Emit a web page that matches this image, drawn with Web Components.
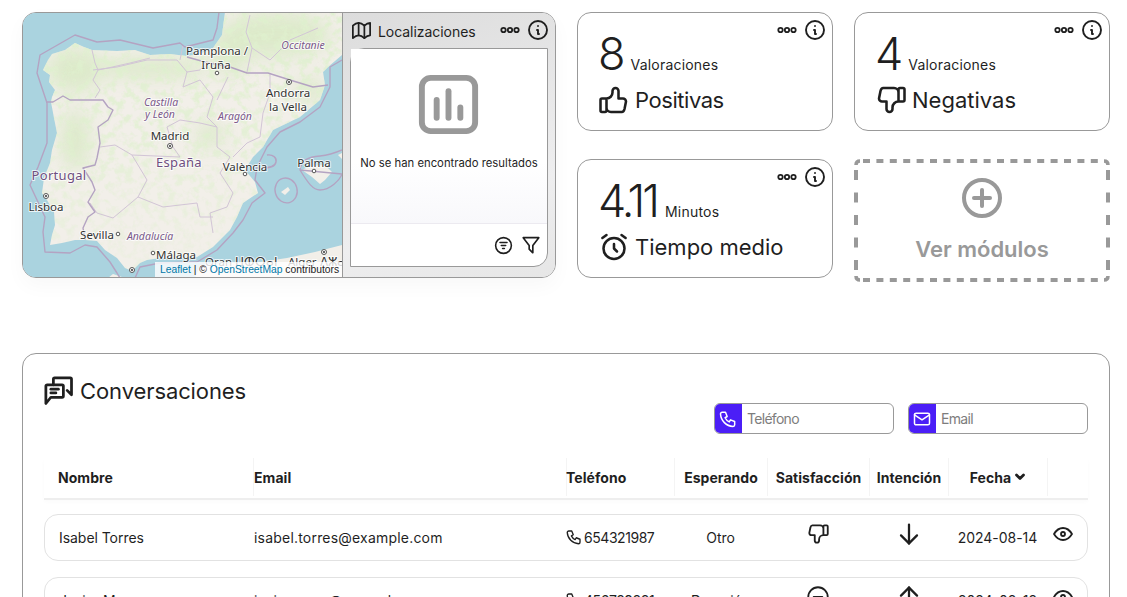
<!DOCTYPE html>
<html lang="es">
<head>
<meta charset="utf-8">
<title>Panel</title>
<style>
	html, body { margin: 0; height: 597px; overflow: hidden; background: #fff; }
	body { font-family: "Inter", "Liberation Sans", sans-serif; color: #1f1f1f; }
</style>
</head>
<body>
<app-dashboard></app-dashboard>
<script>
"use strict";

(function() {
	const icons = {
		dots: `<circle cx="5.5" cy="12" r="2.2"/><circle cx="12" cy="12" r="2.2"/><circle cx="18.5" cy="12" r="2.2"/>`,
		info: `<circle cx="12" cy="12" r="9"/><path d="M12 8h.01"/><path d="M11 12h1v4h1"/>`,
		map: `<path d="M3 7c2-2 4-3 6-3c2 0 4 1 6 3c2-2 4-3 6-3v13c-2 0-4 1-6 3c-2-2-4-3-6-3c-2 0-4 1-6 3z"/><path d="M9 4v13"/><path d="M15 7v13"/>`,
		thumbUp: `<path d="M7 11v8a1 1 0 0 1 -1 1h-2a1 1 0 0 1 -1 -1v-7a1 1 0 0 1 1 -1h3a4 4 0 0 0 4 -4v-1a2 2 0 0 1 4 0v5h3a2 2 0 0 1 2 2l-1 5a2 3 0 0 1 -2 2h-7a3 3 0 0 1 -3 -3"/>`,
		thumbDown: `<g transform="matrix(-1 0 0 1 24 0)"><path d="M7 13v-8a1 1 0 0 0 -1 -1h-2a1 1 0 0 0 -1 1v7a1 1 0 0 0 1 1h3a4 4 0 0 1 4 4v1a2 2 0 0 0 4 0v-5h3a2 2 0 0 0 2 -2l-1 -5a2 3 0 0 0 -2 -2h-7a3 3 0 0 0 -3 3"/></g>`,
		alarm: `<circle cx="12" cy="13" r="7"/><path d="M12 10v3l2 2"/><path d="M7 4l-2.75 2"/><path d="M17 4l2.75 2"/>`,
		plus: `<circle cx="12" cy="12" r="9"/><path d="M8 12h8"/><path d="M12 8v8"/>`,
		chat: `<path d="M1.500 22v-14a1 1 0 0 1 1-1h12a1 1 0 0 1 1 1v8a1 1 0 0 1-1 1h-9z"/><path d="M5.500 10.500h6"/><path d="M5.500 13.500h4"/><path d="M7.500 7v-4.500a1 1 0 0 1 1-1h12.500a1 1 0 0 1 1 1v12.500l-3.500-3.500"/>`,
		phone: `<path d="M5 4h4l2 5l-2.5 1.5a11 11 0 0 0 5 5l1.5 -2.5l5 2v4a2 2 0 0 1 -2 2a16 16 0 0 1 -15 -15a2 2 0 0 1 2 -2"/>`,
		mail: `<path d="M3 7a2 2 0 0 1 2-2h14a2 2 0 0 1 2 2v10a2 2 0 0 1-2 2h-14a2 2 0 0 1-2-2z"/><path d="M3 7l9 6l9-6"/>`,
		eye: `<path d="M10 12a2 2 0 1 0 4 0a2 2 0 0 0 -4 0"/><path d="M21 12c-2.4 4 -5.4 6 -9 6c-3.6 0 -6.6 -2 -9 -6c2.4 -4 5.4 -6 9 -6c3.6 0 6.6 2 9 6"/>`,
		arrowDown: `<path d="M12 5v14"/><path d="M18 13l-6 6"/><path d="M6 13l6 6"/>`,
		arrowUp: `<path d="M12 5v14"/><path d="M18 11l-6 -6"/><path d="M6 11l6 -6"/>`,
		neutral: `<circle cx="12" cy="12" r="9"/><path d="M8 12h8"/>`,
		funnel: `<path d="M3.5 4h17l-6.5 8.5v8l-4-4v-4z"/>`,
		filterList: `<circle cx="12" cy="12" r="9"/><path d="M8 8.5h8"/><path d="M9.5 12h5"/><path d="M11 15.5h2"/>`,
		chevron: `<path d="M5 8l7 7l7-7"/>`,
		chart: `<rect x="3" y="3" width="18" height="18" rx="3"/><path d="M8 10.5v6"/><path d="M12 7.5v9"/><path d="M16 13v3.5"/>`
	};

	class UiIcon extends HTMLElement {
		connectedCallback() {
			let size = this.getAttribute('size') || 24;
			let stroke = this.getAttribute('stroke') || 2;
			this.attachShadow({mode: "open"}).innerHTML = `
			<style>
				:host { display: inline-flex; flex: none; width: ${size}px; height: ${size}px; }
				svg { width: 100%; height: 100%; display: block; }
			</style>
			<svg viewBox="0 0 24 24" fill="none" stroke="currentColor" stroke-width="${stroke}" stroke-linecap="round" stroke-linejoin="round">${icons[this.getAttribute('name')]}</svg>`;
		}
	}
	customElements.define('ui-icon', UiIcon);

	class CardActions extends HTMLElement {
		constructor() {
			super();
			this.attachShadow({mode: "open"}).innerHTML = `
			<style>
				:host { display: flex; gap: 4px; align-items: center; color: #1f1f1f; }
			</style>
			<ui-icon name="dots" stroke="1.800"></ui-icon>
			<ui-icon name="info" stroke="1.900"></ui-icon>`;
		}
	}
	customElements.define('card-actions', CardActions);

	const coast = "M225 12L222 35L213 48L200 54L187 56L170 54L150 55L135 50L117 51L92 50L84 47L75 43L65 50L52 54L48 60L43 70L50 75L49 82L55 90L52 97L51 102L54 118L57 133L52 150L50 163L44 178L42 193L47 200L54 212L55 225L52 235L50 245L62 243L75 240L85 240L97 241L105 250L117 258L125 268L132 271L140 263L147 260L160 258L180 258L197 257L213 247L230 230L237 217L243 203L258 193L255 182L245 170L253 157L263 147L273 130L300 117L320 100L325 85L323 72L328 67L342 55V12Z";

	const mapTemplate = `
	<style>
		:host { display: block; width: 320px; height: 266px; position: relative; overflow: hidden; background: #aad3df; }
		svg { display: block; width: 320px; height: 266px; }
		text { font-family: "Noto Sans", "Open Sans", sans-serif; font-size: 11.5px; fill: #333; text-anchor: middle; paint-order: stroke; stroke: rgba(255,255,255,.75); stroke-width: 2px; stroke-linejoin: round; }
		text.region { font-style: italic; font-size: 10.5px; fill: #7b5a8b; }
		text.country { font-size: 13px; fill: #6f4f80; letter-spacing: .3px; }
		text.far { text-anchor: start; }
		.att { position: absolute; right: 0; bottom: 0; height: 16px; width: 187px; box-sizing: border-box; padding-left: 5px; background: rgba(255,255,255,.8); font: 10.3px/16px "Liberation Sans", Arial, sans-serif; color: #222; white-space: nowrap; }
		.att span { color: #0078a8; }
	</style>
	<svg viewBox="22 12 320 266">
		<defs>
			<clipPath id="land"><path d="${coast}"/></clipPath>
			<filter id="noise" x="0" y="0" width="100%" height="100%">
				<feTurbulence type="fractalNoise" baseFrequency="0.12" numOctaves="3" seed="7"/>
				<feColorMatrix values="0 0 0 0 .74  0 0 0 0 .87  0 0 0 0 .62  4.4 0 0 0 -2"/>
			</filter>
			<filter id="soft"><feGaussianBlur stdDeviation="9"/></filter>
			<linearGradient id="fade" x1="0" y1="0" x2="0" y2="1">
				<stop offset="0" stop-color="#fff"/>
				<stop offset=".45" stop-color="#fff" stop-opacity=".8"/>
				<stop offset="1" stop-color="#fff" stop-opacity=".22"/>
			</linearGradient>
			<mask id="north" maskUnits="userSpaceOnUse" x="22" y="12" width="320" height="266">
				<rect x="22" y="12" width="320" height="266" fill="url(#fade)"/>
			</mask>
		</defs>
		<rect x="22" y="12" width="320" height="266" fill="#aad3df"/>
		<g fill="#f2efe9">
			<path d="${coast}"/>
			<path d="M302 170L310 166L325 165L332 172L325 180L320 184L312 177Z"/>
			<path d="M281 192L288 187L290 190L285 195Z" />
			<path d="M338 155L342 153V159Z"/>
			<path d="M195 278L200 265L230 263L260 262L287 258L315 252L342 245V278Z"/>
			<path d="M108 278L113 274L125 278Z"/>
		</g>
		<g clip-path="url(#land)">
			<g fill="#d5e8c0" filter="url(#soft)" opacity=".75">
				<ellipse cx="75" cy="70" rx="28" ry="22"/>
				<ellipse cx="150" cy="68" rx="60" ry="10"/>
				<ellipse cx="275" cy="35" rx="55" ry="22"/>
				<ellipse cx="230" cy="50" rx="18" ry="25"/>
				<ellipse cx="75" cy="140" rx="14" ry="30"/>
				<ellipse cx="310" cy="90" rx="14" ry="12"/>
				<ellipse cx="210" cy="135" rx="14" ry="12"/>
			</g>
			<g mask="url(#north)">
				<rect x="22" y="12" width="320" height="266" filter="url(#noise)" opacity=".85"/>
			</g>
		</g>
		<g fill="none" stroke="#d2c5d6" stroke-width="1" stroke-linejoin="round">
			<path d="M92 50L95 63L98 70L93 80L100 90L95 98"/>
			<path d="M98 70L108 68L130 63L150 58"/>
			<path d="M93 70L117 67L147 60L177 60L187 72L183 87L200 80L213 97L207 117L217 127L217 147L230 157L220 173L233 193L227 207L210 213L213 233"/>
			<path d="M100 147L115 145L132 155L147 180L138 197L163 207L197 203L200 217L213 217"/>
			<path d="M90 203L97 213L113 218L138 197"/>
			<path d="M167 127L180 120L200 123L217 127"/>
			<path d="M167 127L173 147L180 157L132 155"/>
			<path d="M270 73L270 93L263 113L260 137L247 143L233 157"/>
			<path d="M228 77L217 100"/>
			<path d="M180 60L183 45M187 72L200 70L205 62"/>
			<path d="M250 15L246 32L252 48L247 72"/>
			<path d="M252 48L270 60L290 40L318 28"/>
		</g>
		<g fill="none" stroke="#b4a3c2" stroke-width="1.400" stroke-linejoin="round">
			<path d="M46 102L53 102L63 96L70 100L88 100L103 100L108 107L113 110L108 120L98 127L100 143L97 158L95 165L83 168L92 182L95 190L88 202L95 212L88 217L83 228L85 240"/>
			<path d="M187 57L205 62L230 67L247 73L268 73L290 80L313 87L328 85"/>
			<path d="M219 12L217 28L213 40L185 47L180 43L153 48L120 40L97 42L75 35L40 55L37 73L47 103L47 143L38 167L30 185L45 217L43 232L45 252L70 253L85 245L97 247L110 262L117 273L120 278"/>
			<path d="M342 60L330 67L330 87L320 107L300 122L280 132L267 147L257 167L255 180L265 193L252 203L243 220L233 233L217 250L197 262L160 263L140 267L135 278"/>
			<path d="M300 170C301 160 308 157 320 156C330 155 335 153 342 150M342 174C340 180 330 190 320 190C313 190 308 183 300 170Z"/>
			<ellipse cx="286" cy="190.500" rx="11" ry="12.500" transform="rotate(-15 286 190)"/>
			<path d="M267 155C273 154 277 158 276 162C275 167 270 168 262 168"/>
		</g>
		<g fill="#fff" stroke="#555" stroke-width="1">
			<circle cx="217" cy="73" r="1.800"/><circle cx="245" cy="174" r="1.800"/><circle cx="314" cy="171" r="1.800"/>
			<circle cx="118" cy="234" r="1.800"/><circle cx="153" cy="253" r="1.800"/>
			<circle cx="289" cy="82" r="2.500"/><circle cx="170" cy="146" r="2.500"/><circle cx="46" cy="196" r="2.500"/><circle cx="132" cy="270" r="2.500"/><circle cx="324" cy="252" r="2.500"/>
		</g>
		<g fill="#333">
			<circle cx="289" cy="82" r="1"/><circle cx="170" cy="146" r="1"/><circle cx="46" cy="196" r="1"/><circle cx="132" cy="270" r="1"/><circle cx="324" cy="252" r="1"/>
		</g>
		<text x="217" y="55">Pamplona /</text>
		<text x="216" y="69">Iruña</text>
		<text class="region" x="303" y="49">Occitanie</text>
		<text x="288" y="97">Andorra</text>
		<text x="288" y="111">la Vella</text>
		<text class="region" x="161" y="106">Castilla</text>
		<text class="region" x="160" y="118">y León</text>
		<text class="region" x="235" y="120">Aragón</text>
		<text x="170" y="140">Madrid</text>
		<text class="country" x="179" y="167">España</text>
		<text x="245" y="171">València</text>
		<text x="314" y="167">Palma</text>
		<text class="country" x="59" y="180">Portugal</text>
		<text x="46" y="211">Lisboa</text>
		<text x="97" y="239">Sevilla</text>
		<text class="region" x="150" y="240">Andalucía</text>
		<text x="176" y="259">Málaga</text>
		<text class="far" x="205" y="266">Oran ⵡⵀⵔⴰⵏ</text>
		<text class="far" x="288" y="266">Alger ⴷⵣⴰ</text>
	</svg>
	<div class="att"><span>Leaflet</span> | © <span>OpenStreetMap</span> contributors</div>
	`;

	class SpainMap extends HTMLElement {
		constructor() {
			super();
			this.attachShadow({mode: "open"}).innerHTML = mapTemplate;
		}
	}
	customElements.define('spain-map', SpainMap);

	class MapCard extends HTMLElement {
		constructor() {
			super();
			this.attachShadow({mode: "open"}).innerHTML = `
			<style>
				:host { display: flex; box-sizing: border-box; height: 266px; align-self: start; border: 1px solid #999; border-radius: 14px; overflow: hidden; }
				spain-map { flex: none; margin-left: -1px; margin-top: -1px; }
				.side { flex: 1; min-width: 0; display: flex; flex-direction: column; box-sizing: border-box; border-left: 1px solid #999; padding: 0 7px 10px 7px; background: linear-gradient(160deg, #dcdcdc, #eeeeef 70%, #e6e6e6); }
				.head { display: flex; align-items: center; height: 35px; font-size: 14px; white-space: nowrap; }
				.head .title { flex: 1; margin: 2px 0 0 5px; letter-spacing: -.05px; }
				.head card-actions { margin-right: -2px; margin-top: -2px; }
				.inner { flex: 1; display: flex; flex-direction: column; background: #fff; border: 1px solid #999; border-radius: 14px 0 14px 0; }
				.empty { height: 175px; box-sizing: border-box; padding-top: 20px; display: flex; flex-direction: column; align-items: center; border-bottom: 1px solid #eceaf0; background: linear-gradient(#fff 65%, #f8f8fb); color: #999; }
				.empty ui-icon { margin-left: -2px; }
				.empty p { margin: 15px 0 0; font-size: 11.3px; line-height: 16px; color: #1f1f1f; white-space: nowrap; }
				.foot { flex: 1; display: flex; justify-content: flex-end; align-items: center; gap: 6px; padding: 0 5px 0 0; }
			</style>
			<spain-map></spain-map>
			<div class="side">
				<div class="head">
					<ui-icon name="map" size="23" stroke="1.800"></ui-icon>
					<span class="title">Localizaciones</span>
					<card-actions></card-actions>
				</div>
				<div class="inner">
					<div class="empty">
						<ui-icon name="chart" size="71" stroke="2"></ui-icon>
						<p>No se han encontrado resultados</p>
					</div>
					<div class="foot">
						<ui-icon name="filterList" size="21" stroke="1.800"></ui-icon>
						<ui-icon name="funnel" size="22" stroke="1.800"></ui-icon>
					</div>
				</div>
			</div>`;
		}
	}
	customElements.define('map-card', MapCard);

	class StatCard extends HTMLElement {
		connectedCallback() {
			this.attachShadow({mode: "open"}).innerHTML = `
			<style>
				:host { display: grid; grid-template-columns: minmax(0, 1fr) auto; box-sizing: border-box; height: 119px; border: 1px solid #999; border-radius: 14px; }
				.body { padding: 19px 0 0 20px; white-space: nowrap; }
				card-actions { padding: 5px 5px 0 0; align-self: start; }
				.num { display: flex; align-items: baseline; gap: 8px; }
				.num b { font-weight: 300; font-size: 45px; line-height: 44px; letter-spacing: -3px; }
				.num span { font-size: 14px; letter-spacing: .2px; }
				.label { display: flex; align-items: center; margin: 7px 0 0 -2px; height: 34px; gap: 3px; font-size: 22px; letter-spacing: ${this.getAttribute('spacing') || 0}px; }
			</style>
			<div class="body">
				<div class="num"><b>${this.getAttribute('value')}</b><span>${this.getAttribute('unit')}</span></div>
				<div class="label"><ui-icon name="${this.getAttribute('icon')}" size="36" stroke="1.700"></ui-icon>${this.getAttribute('label')}</div>
			</div>
			<card-actions></card-actions>`;
		}
	}
	customElements.define('stat-card', StatCard);

	class AddCard extends HTMLElement {
		constructor() {
			super();
			this.attachShadow({mode: "open"}).innerHTML = `
			<style>
				:host { display: flex; flex-direction: column; align-items: center; box-sizing: border-box; height: 123px; position: relative; padding-top: 15px; color: #999; }
				.dash { position: absolute; inset: 0; width: 256px; height: 123px; }
				span { margin-top: 13px; font-size: 22px; line-height: 28px; font-weight: 600; }
			</style>
			<svg class="dash" viewBox="0 0 256 123" fill="none" stroke="#999" stroke-width="4">
				<path d="M9 2H247" stroke-dasharray="7 6.400"/>
				<path d="M9 121H247" stroke-dasharray="7 6.400"/>
				<path d="M2 11V112" stroke-dasharray="10 12.500"/>
				<path d="M254 11V112" stroke-dasharray="10 12.500"/>
				<path d="M2 6Q2 2 6 2M250 2Q254 2 254 6M254 117Q254 121 250 121M6 121Q2 121 2 117" stroke-width="3.500"/>
			</svg>
			<ui-icon name="plus" size="48" stroke="2"></ui-icon>
			<span>Ver módulos</span>`;
		}
	}
	customElements.define('add-card', AddCard);

	class SearchBox extends HTMLElement {
		connectedCallback() {
			this.attachShadow({mode: "open"}).innerHTML = `
			<style>
				:host { display: flex; box-sizing: border-box; width: 180px; height: 31px; border: 1px solid #999; border-radius: 6px; overflow: hidden; }
				.ic { flex: none; width: 28px; margin: -1px 0 -1px -1px; display: flex; align-items: center; justify-content: center; background: #4b1ef7; color: #fff; }
				.ph { padding-left: 5px; font-size: 14px; line-height: 29px; color: #7d7d7d; letter-spacing: -.7px; }
			</style>
			<div class="ic"><ui-icon name="${this.getAttribute('icon')}" size="20" stroke="1.800"></ui-icon></div>
			<div class="ph">${this.getAttribute('placeholder')}</div>`;
		}
	}
	customElements.define('search-box', SearchBox);

	const columnStyle = `
		.cell { display: flex; align-items: center; justify-content: center; min-width: 0; white-space: nowrap; }
		.left { justify-content: flex-start; }
	`;

	class TableHead extends HTMLElement {
		constructor() {
			super();
			this.attachShadow({mode: "open"}).innerHTML = `
			<style>
				:host { display: grid; grid-template-columns: 209px 313px 108px 93px 102px 79px 99px 41px; height: 42px; box-sizing: border-box; padding-bottom: 2px; border-bottom: 2px solid #eee; box-shadow: 0 2px 4px rgba(0,0,0,.02); font-size: 14px; font-weight: 650; letter-spacing: .05px; }
				${columnStyle}
				.cell + .cell { border-left: 1px solid #f4f4f4; }
				.cell ui-icon { margin-left: 3px; }
			</style>
			<div class="cell left" style="padding-left:14px">Nombre</div>
			<div class="cell left">Email</div>
			<div class="cell left" style="text-indent:-1px">Teléfono</div>
			<div class="cell">Esperando</div>
			<div class="cell">Satisfacción</div>
			<div class="cell">Intención</div>
			<div class="cell">Fecha<ui-icon name="chevron" size="12" stroke="5.500"></ui-icon></div>
			<div class="cell"></div>`;
		}
	}
	customElements.define('table-head', TableHead);

	class ConvRow extends HTMLElement {
		connectedCallback() {
			let a = (n) => this.getAttribute(n);
			this.attachShadow({mode: "open"}).innerHTML = `
			<style>
				:host { display: grid; grid-template-columns: 208px 313px 108px 93px 102px 79px 99px 40px; height: 47px; box-sizing: border-box; border: 1px solid #e2e2e2; border-radius: 14px; font-size: 14px; letter-spacing: -.05px; }
				${columnStyle}
				.up { padding-bottom: 7px; }
				.mail { padding-left: 1px; letter-spacing: .2px; }
				.phone { letter-spacing: -.45px; }
				.phone ui-icon { margin: -1px 1px 0 -1px; }
			</style>
			<div class="cell left" style="padding-left:14px">${a('name')}</div>
			<div class="cell left mail">${a('email')}</div>
			<div class="cell left phone"><ui-icon name="phone" size="18" stroke="1.800"></ui-icon>${a('phone')}</div>
			<div class="cell">${a('waiting')}</div>
			<div class="cell up"><ui-icon name="${a('mood')}" size="26" stroke="1.700"></ui-icon></div>
			<div class="cell up"><ui-icon name="${a('intent')}" size="32" stroke="1.700"></ui-icon></div>
			<div class="cell">${a('date')}</div>
			<div class="cell up" style="padding-right:8px"><ui-icon name="eye" size="24" stroke="1.800"></ui-icon></div>`;
		}
	}
	customElements.define('conv-row', ConvRow);

	class ConvPanel extends HTMLElement {
		constructor() {
			super();
			this.attachShadow({mode: "open"}).innerHTML = `
			<style>
				:host { display: block; box-sizing: border-box; height: 320px; border: 1px solid #999; border-radius: 14px; padding: 22px 21px 0; }
				header { display: flex; justify-content: space-between; margin-bottom: 24px; }
				.title { display: flex; align-items: center; gap: 6px; height: 30px; font-size: 22px; letter-spacing: -.1px; }
				.search { display: flex; gap: 14px; margin-top: 27px; }
				.rows { display: flex; flex-direction: column; gap: 16px; margin-top: 14px; }
			</style>
			<header>
				<div class="title"><ui-icon name="chat" size="30" stroke="2.200"></ui-icon>Conversaciones</div>
				<div class="search">
					<search-box icon="phone" placeholder="Teléfono"></search-box>
					<search-box icon="mail" placeholder="Email"></search-box>
				</div>
			</header>
			<table-head></table-head>
			<div class="rows"><slot></slot></div>`;
		}
	}
	customElements.define('conv-panel', ConvPanel);

	class AppDashboard extends HTMLElement {
		constructor() {
			super();
			this.attachShadow({mode: "open"}).innerHTML = `
			<style>
				:host { display: block; padding: 12px 17px 0 22px; }
				.top { display: grid; grid-template-columns: 534px 256px 256px; column-gap: 21px; row-gap: 28px; }
				map-card { grid-row: 1 / span 2; box-shadow: 0 8px 20px rgba(0,0,0,.03); }
				conv-panel { margin-top: 71px; }
			</style>
			<div class="top">
				<map-card></map-card>
				<stat-card value="8" unit="Valoraciones" icon="thumbUp" label="Positivas" spacing="-.45"></stat-card>
				<stat-card value="4" unit="Valoraciones" icon="thumbDown" label="Negativas"></stat-card>
				<stat-card value="4.11" unit="Minutos" icon="alarm" label="Tiempo medio"></stat-card>
				<add-card></add-card>
			</div>
			<conv-panel>
				<conv-row name="Isabel Torres" email="isabel.torres@example.com" phone="654321987" waiting="Otro" mood="thumbDown" intent="arrowDown" date="2024-08-14"></conv-row>
				<conv-row name="Javier Mora" email="javier.mora@example.com" phone="456789881" waiting="Duración" mood="neutral" intent="arrowUp" date="2024-08-12"></conv-row>
			</conv-panel>`;
		}
	}
	customElements.define('app-dashboard', AppDashboard);
})();
</script>
</body>
</html>
